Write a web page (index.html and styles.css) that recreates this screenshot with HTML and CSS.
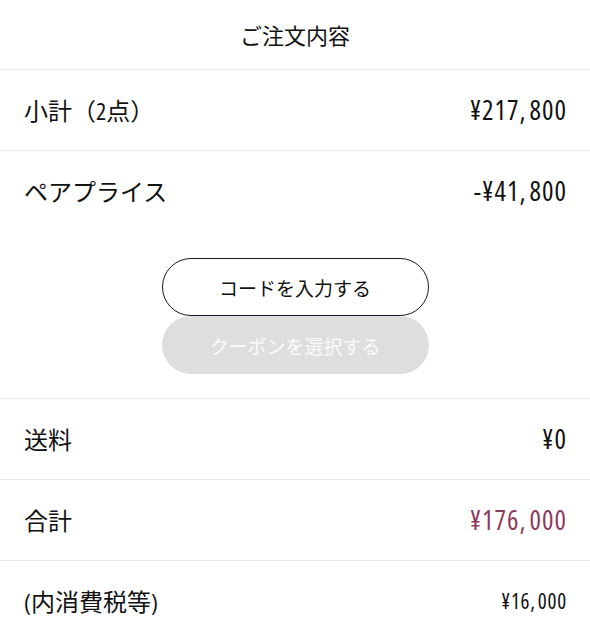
FILE: index.html
```html
<!DOCTYPE html>
<html lang="ja">
<head>
<meta charset="utf-8">
<link rel="stylesheet" href="styles.css">
</head>
<body>
<div class="summary">
  <h1 class="title">ご注文内容</h1>
  <div class="row">
    <span class="label">小計（2点）</span>
    <span class="amount">¥217<span class="sep">,</span>800</span>
  </div>
  <div class="block">
    <div class="row plain">
      <span class="label">ペアプライス</span>
      <span class="amount">-¥41<span class="sep">,</span>800</span>
    </div>
    <div class="buttons">
      <button class="btn btn-outline">コードを入力する</button>
      <button class="btn btn-disabled">クーポンを選択する</button>
    </div>
  </div>
  <div class="row">
    <span class="label">送料</span>
    <span class="amount">¥0</span>
  </div>
  <div class="row">
    <span class="label">合計</span>
    <span class="amount total">¥176<span class="sep">,</span>000</span>
  </div>
  <div class="row plain">
    <span class="label">(内消費税等)</span>
    <span class="amount small">¥16<span class="sep">,</span>000</span>
  </div>
</div>
</body>
</html>
```
FILE: styles.css
```css
* { box-sizing: border-box; }
html, body { margin: 0; padding: 0; background: #fff; }
body {
  font-family: "Open Sans", "Noto Sans CJK JP", sans-serif;
  font-stretch: 75%;
  color: #111;
}
.summary { width: 590px; }
.title {
  margin: 0;
  height: 70px;
  display: flex;
  align-items: center;
  justify-content: center;
  font-size: 22px;
  font-weight: 400;
  border-bottom: 1px solid #e9e9e9;
  padding-bottom: 1px;
}
.row {
  height: 81px;
  display: flex;
  align-items: center;
  justify-content: space-between;
  padding: 0 24px 1px 24px;
  border-bottom: 1px solid #e9e9e9;
}
.row.plain { border-bottom: none; height: 80px; }
.block { border-bottom: 1px solid #e9e9e9; padding-bottom: 24px; }
.label { font-size: 24px; }
.amount {
  font-size: 27px;
  font-weight: 380;
  letter-spacing: 1px;
  margin-right: -1px;
}
.sep { margin-right: 3px; }
.amount.total { color: #8d3c5e; }
.amount.small { font-size: 21px; letter-spacing: 0.8px; }
.amount.small .sep { margin-right: 2px; }
.buttons {
  display: flex;
  flex-direction: column;
  align-items: center;
  padding-top: 27px;
}
.btn {
  width: 267px;
  height: 58px;
  border-radius: 29px;
  font-family: "Noto Sans CJK JP", sans-serif;
  font-size: 19px;
  display: flex;
  align-items: center;
  justify-content: center;
  padding: 0;
}
.btn-outline {
  background: #fff;
  border: 1.5px solid #14192b;
  color: #111;
}
.btn-disabled {
  background: #dedede;
  border: none;
  color: #fafafa;
}
```
